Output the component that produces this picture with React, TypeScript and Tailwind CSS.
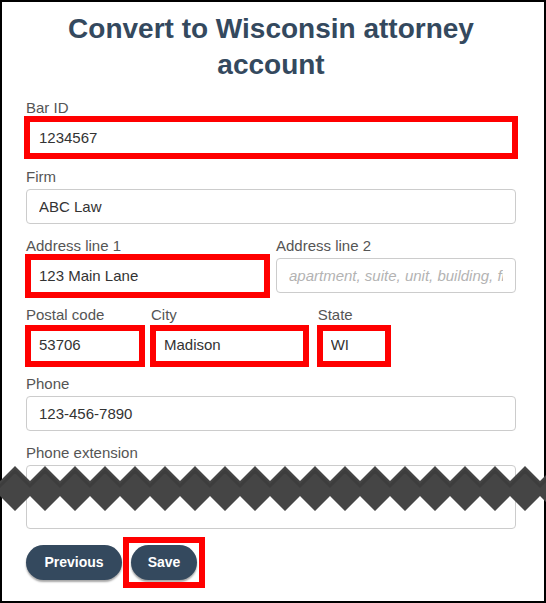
import React from 'react';

const font = { fontFamily: '"Liberation Sans", Arial, sans-serif' };

interface FieldProps {
  label: string;
  value?: string;
  placeholder?: string;
  mark?: string;
  tall?: boolean;
  className?: string;
}

function Field({ label, value, placeholder, mark, tall, className }: FieldProps) {
  return (
    <div className={className}>
      <label className="block text-[15px] leading-[20px] text-[#555] mb-[2px]">{label}</label>
      <div className="relative">
        <input
          readOnly
          value={value ?? ''}
          placeholder={placeholder}
          className={`block w-full ${tall ? 'h-[64px]' : 'h-[35px]'} rounded-[4px] border border-[#ccc] bg-white px-[12px] text-[15px] text-[#333] outline-none placeholder:italic placeholder:text-[#b3b3b3]`}
          style={font}
        />
        {mark && <div className={`pointer-events-none absolute border-[6px] border-[#ff0000] ${mark}`} />}
      </div>
    </div>
  );
}

function Tear() {
  const top: string[] = [];
  const bottom: string[] = [];
  for (let k = -1; k <= 19; k++) {
    top.push(`${30 * k},15`, `${30 * k + 15},0`);
  }
  for (let k = 19; k >= -1; k--) {
    bottom.push(`${30 * k + 15},45`, `${30 * k},30`);
  }
  const shade = top.map((p) => {
    const [x, y] = p.split(',').map(Number);
    return `${x},${y + 5}`;
  });
  return (
    <svg className="absolute left-0 top-[466px]" width="546" height="46" viewBox="0 0 546 46">
      <polygon points={[...top, ...bottom].join(' ')} fill="#454545" />
      <polyline points={shade.join(' ')} fill="none" stroke="#3a3a3a" strokeWidth="3" opacity="0.7" />
    </svg>
  );
}

export default function App() {
  return (
    <div className="relative w-[546px] h-[603px] bg-white" style={font}>
      <div className="h-full border-2 border-black pl-[24px] pr-[28px] pt-[9px]">
        <h1 className="text-center text-[28px] leading-[36px] font-bold text-[#34495e] mb-[15px]">
          Convert to Wisconsin attorney
          <br />
          account
        </h1>

        <Field label="Bar ID" value="1234567" mark="-left-[2px] -right-[2px] -top-[4px] -bottom-[4px]" className="mb-[12px]" />
        <Field label="Firm" value="ABC Law" className="mb-[12px]" />

        <div className="grid grid-cols-12 gap-x-[10px] mb-[12px]">
          <Field
            label="Address line 1"
            value="123 Main Lane"
            mark="-left-[1px] -right-[4px] -top-[4px] -bottom-[5px]"
            className="col-span-6"
          />
          <Field
            label="Address line 2"
            placeholder="apartment, suite, unit, building, floor, etc."
            className="col-span-6"
          />
        </div>

        <div className="grid grid-cols-12 gap-x-[10px] mb-[12px]">
          <Field label="Postal code" value="53706" mark="-left-[1px] -right-[4px] -top-[2px] -bottom-[5px]" className="col-span-3" />
          <Field label="City" value="Madison" mark="-left-[1px] -right-[1px] -top-[2px] -bottom-[5px]" className="col-span-4" />
          <Field label="State" value="WI" mark="-left-[1px] right-0 -top-[2px] -bottom-[5px]" className="col-span-2" />
        </div>

        <Field label="Phone" value="123-456-7890" className="mb-[12px]" />
        <Field label="Phone extension" tall />

        <div className="mt-[16px] flex gap-[9px]">
          <button className="h-[35px] w-[96px] rounded-full bg-[#34495e] text-[14px] font-bold text-white shadow-[0_2px_2px_rgba(0,0,0,0.35)]">
            Previous
          </button>
          <div className="relative">
            <button className="h-[35px] w-[66px] rounded-full bg-[#34495e] text-[14px] font-bold text-white shadow-[0_2px_2px_rgba(0,0,0,0.35)]">
              Save
            </button>
            <div className="pointer-events-none absolute -left-[8px] -right-[8px] -top-[8px] -bottom-[8px] border-[6px] border-[#ff0000]" />
          </div>
        </div>
      </div>
      <Tear />
    </div>
  );
}
